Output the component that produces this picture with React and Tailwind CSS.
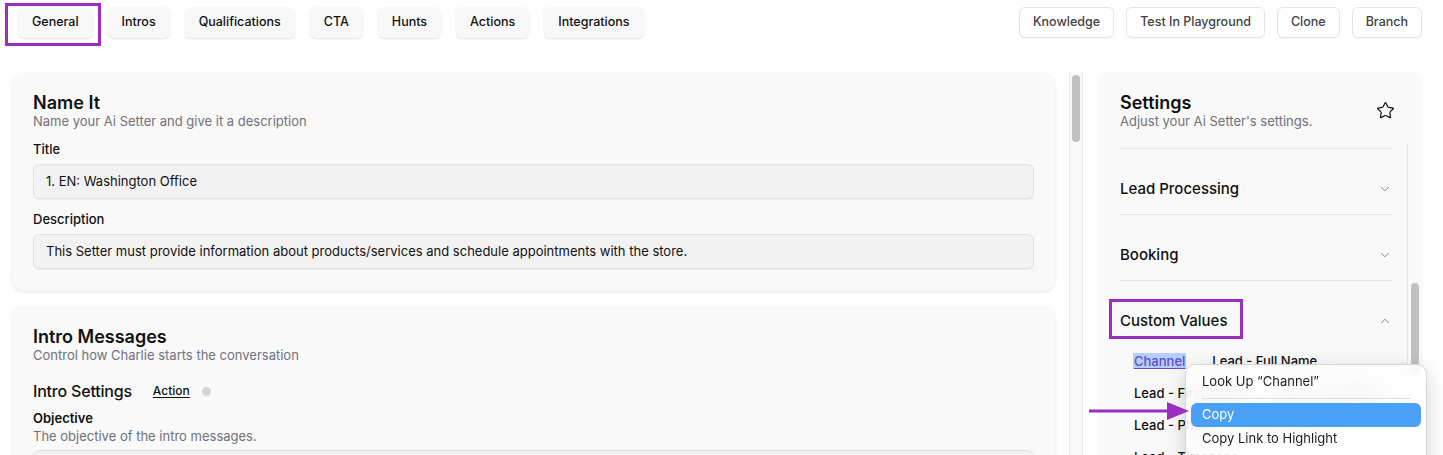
import React from 'react';
import { Star, ChevronDown, ChevronUp } from 'lucide-react';

const tabs = ['General', 'Intros', 'Qualifications', 'CTA', 'Hunts', 'Actions', 'Integrations'];
const tools = ['Knowledge', 'Test In Playground', 'Clone', 'Branch'];

function TabButton({ label }) {
  return (
    <button className="h-[31px] px-[14px] rounded-md bg-[#f8f8f8] text-[12.5px] font-medium text-[#111] shadow-[0_1px_2px_rgba(0,0,0,0.12)]">
      {label}
    </button>
  );
}

function ToolButton({ label }) {
  return (
    <button className="h-[31px] px-[13px] rounded-md bg-white border border-[#e4e4e7] text-[12.5px] font-medium text-[#3f3f46] shadow-[0_1px_1px_rgba(0,0,0,0.04)]">
      {label}
    </button>
  );
}

function Field({ label, value }) {
  return (
    <div className="flex flex-col">
      <div className="text-[13px] leading-[16px] font-medium text-[#111]">{label}</div>
      <div className="mt-[7px] h-[35px] flex items-center px-[12px] rounded-md bg-[#f2f2f2] border border-[#e2e2e2] shadow-[0_1px_1px_rgba(0,0,0,0.05)] text-[13px] text-[#111]">
        {value}
      </div>
    </div>
  );
}

function Section({ title, open, children }) {
  return (
    <div className="border-t border-[#e4e4e7]">
      <div className="flex items-center justify-between pt-[28px] pb-[13px]">
        <span className="text-[15px] leading-[24px] font-medium text-[#111]">{title}</span>
        {open ? (
          <ChevronUp size={14} strokeWidth={1.5} className="text-[#71717a] mr-[1px]" />
        ) : (
          <ChevronDown size={14} strokeWidth={1.5} className="text-[#71717a] mr-[1px]" />
        )}
      </div>
      {children}
    </div>
  );
}

export default function App() {
  return (
    <div
      className="relative w-[1443px] h-[455px] overflow-hidden bg-white text-[#111]"
      style={{ fontFamily: 'Inter, "Noto Sans", sans-serif' }}
    >
      {/* toolbar */}
      <div className="flex items-center justify-between pl-[18px] pr-[21px] pt-[7px]">
        <div className="flex items-center gap-[15px]">
          {tabs.map((t) => (
            <TabButton key={t} label={t} />
          ))}
        </div>
        <div className="flex items-center gap-[12px]">
          {tools.map((t) => (
            <ToolButton key={t} label={t} />
          ))}
        </div>
      </div>

      {/* body */}
      <div className="flex mt-[34px] h-[420px]">
        {/* editor column */}
        <div className="ml-[12px] w-[1043px] flex flex-col gap-[15px] pt-[1px]">
          <div className="rounded-xl bg-[#f9f9f9] shadow-[0_1px_3px_rgba(0,0,0,0.12)] px-[21px] pt-[20px] pb-[22px]">
            <div className="text-[18px] leading-[20px] font-semibold">Name It</div>
            <div className="text-[13px] leading-[16px] text-[#71717a]">Name your Ai Setter and give it a description</div>
            <div className="mt-[12px] flex flex-col gap-[12px]">
              <Field label="Title" value="1. EN: Washington Office" />
              <Field
                label="Description"
                value="This Setter must provide information about products/services and schedule appointments with the store."
              />
            </div>
          </div>

          <div className="rounded-xl bg-[#f9f9f9] shadow-[0_1px_3px_rgba(0,0,0,0.12)] px-[21px] pt-[21px] pb-[22px]">
            <div className="text-[18px] leading-[20px] font-semibold">Intro Messages</div>
            <div className="text-[13px] leading-[16px] text-[#71717a]">Control how Charlie starts the conversation</div>
            <div className="mt-[16px] flex items-center h-[24px]">
              <span className="text-[16px] font-medium tracking-[-0.2px]">Intro Settings</span>
              <span className="ml-[21px] text-[12px] font-medium underline underline-offset-2">Action</span>
              <span className="ml-[12px] w-[9px] h-[9px] rounded-full bg-[#d4d4d8]" />
            </div>
            <div className="mt-[7px] text-[13px] leading-[16px] font-semibold">Objective</div>
            <div className="mt-[2px] text-[13px] leading-[16px] text-[#71717a]">The objective of the intro messages.</div>
            <div className="mt-[6px] h-[35px] rounded-md bg-[#f2f2f2] border border-[#e2e2e2]" />
          </div>
        </div>

        {/* page scrollbar */}
        <div className="ml-[14px] w-[14px] bg-[#fafafa] border-x border-[#e8e8e8] pt-[3px] flex justify-center">
          <div className="w-[8px] h-[67px] rounded-full bg-[#c1c1c1]" />
        </div>

        {/* settings panel */}
        <div className="ml-[15px] w-[324px] rounded-t-xl bg-[#f9f9f9] shadow-[0_0_2px_rgba(0,0,0,0.06)] flex flex-col">
          <div className="flex items-center justify-between pl-[22px] pr-[27px] pt-[21px] pb-[14px]">
            <div>
              <div className="text-[18px] leading-[20px] font-semibold">Settings</div>
              <div className="text-[13px] leading-[16px] text-[#71717a]">Adjust your Ai Setter's settings.</div>
            </div>
            <Star size={19} strokeWidth={1.5} className="text-[#111] mt-[-2px]" />
          </div>

          <div className="flex flex-1">
            <div className="ml-[22px] w-[273px] pt-[5px]">
              <Section title="Lead Processing" />
              <Section title="Booking" />
              <Section title="Custom Values" open>
                <div className="pl-[14px] pt-[7px] flex flex-col gap-[16px] text-[13px] leading-[16px] font-medium">
                  <div className="flex gap-[27px]">
                    <span className="bg-[#b8cdfa] text-[#5a4fcf] underline underline-offset-2 px-[1px] -mx-[1px]">Channel</span>
                    <span>Lead - Full Name</span>
                  </div>
                  <div className="flex gap-[27px]">
                    <span>Lead - First Name</span>
                    <span>Lead - Last Name</span>
                  </div>
                  <div className="flex gap-[27px]">
                    <span>Lead - Phone</span>
                    <span>Lead - Email</span>
                  </div>
                  <div className="flex gap-[27px]">
                    <span>Lead - Timezone</span>
                  </div>
                </div>
              </Section>
            </div>
            <div className="ml-[14px] w-[14px] border-l border-[#e6e6e6] pt-[140px] flex justify-center">
              <div className="w-[8px] h-[92px] rounded-full bg-[#c1c1c1]" />
            </div>
          </div>
        </div>
      </div>

      {/* context menu */}
      <div className="absolute left-[1185px] top-[364px] w-[242px] h-[110px] rounded-[10px] border border-[#d6d6d6] bg-white/80 backdrop-blur-md shadow-[0_6px_20px_rgba(0,0,0,0.18)] p-[5px] text-[13px]">
        <div className="h-[24px] flex items-center px-[11px] text-[#1d1d1f]">Look Up “Channel”</div>
        <div className="mx-[11px] my-[4px] h-px bg-[#dcdcdc]" />
        <div className="h-[24px] flex items-center px-[11px] rounded-[6px] bg-[#4a9ff7] text-white">Copy</div>
        <div className="h-[24px] flex items-center px-[11px] text-[#1d1d1f]">Copy Link to Highlight</div>
      </div>

      {/* callouts */}
      <div className="absolute left-[5px] top-[3px] w-[96px] h-[43px] border-[3px] border-[#9a2fbf]" />
      <div className="absolute left-[1109px] top-[299px] w-[134px] h-[40px] border-[3px] border-[#9a2fbf]" />
      <svg className="absolute left-[1087px] top-[400px]" width="104" height="22" viewBox="0 0 104 22">
        <line x1="2" y1="11" x2="84" y2="11" stroke="#9a2fbf" strokeWidth="3" />
        <polygon points="80,2 102,11 80,20" fill="#9a2fbf" />
      </svg>
    </div>
  );
}
